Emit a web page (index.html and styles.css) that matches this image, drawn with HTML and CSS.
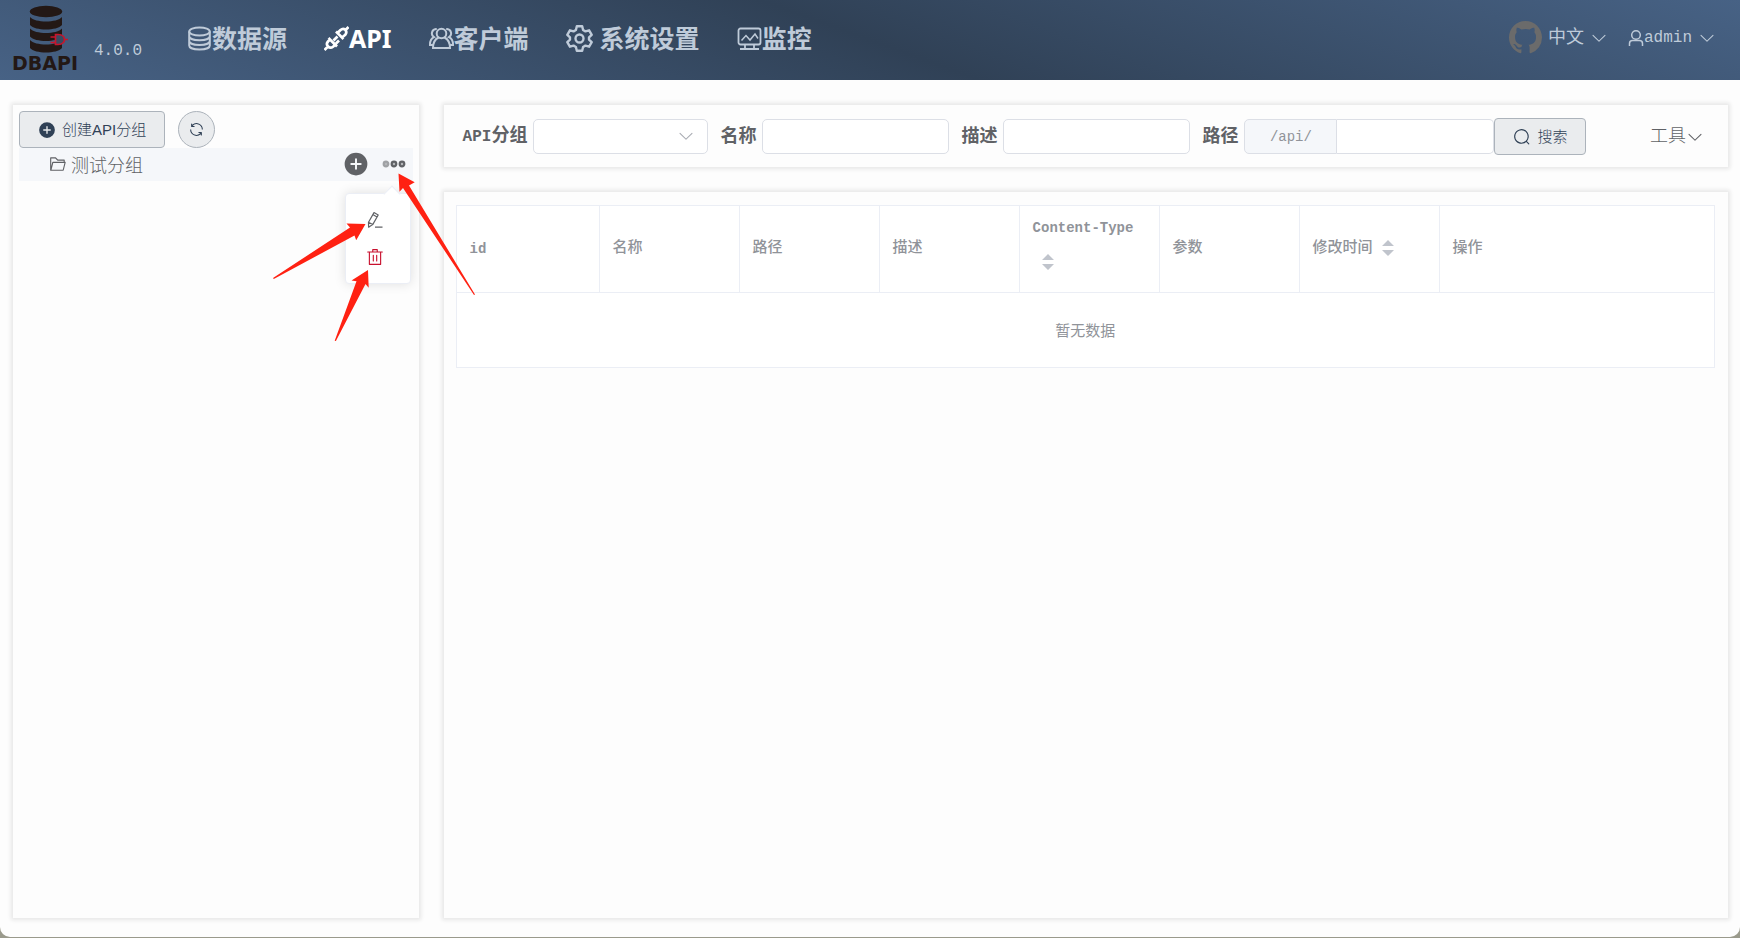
FILE: index.html
```html
<!DOCTYPE html>
<html lang="zh-CN">
<head>
<meta charset="utf-8">
<title>DBAPI</title>
<link rel="stylesheet" href="styles.css">
</head>
<body>
<svg class="sprite" aria-hidden="true">
  <symbol id="i-down" viewBox="0 0 1024 1024"><path d="M831.872 340.864 512 652.672 192.128 340.864a30.592 30.592 0 0 0-42.752 0 29.12 29.12 0 0 0 0 41.6L489.664 714.24a32 32 0 0 0 44.672 0l340.288-331.712a29.12 29.12 0 0 0 0-41.728 30.592 30.592 0 0 0-42.752 0z"/></symbol>
  <symbol id="i-plus" viewBox="0 0 1024 1024"><path d="M512 64a448 448 0 1 1 0 896 448 448 0 0 1 0-896zm-38.4 409.6H326.4a38.4 38.4 0 1 0 0 76.8h147.2v147.2a38.4 38.4 0 0 0 76.8 0V550.4h147.2a38.4 38.4 0 0 0 0-76.8H550.4V326.4a38.4 38.4 0 1 0-76.8 0v147.2z"/></symbol>
</svg>
<div class="window">
  <header class="topbar">
    <a class="brand" href="#">
      <svg class="brand-mark" viewBox="0 0 40 50" width="40" height="50">
        <g fill="#231815">
          <ellipse cx="17" cy="8.500" rx="16.200" ry="5.800"/>
          <path d="M1 14c5 6 27 6 32 0v8c-5 6-27 6-32 0z"/>
          <path d="M1 25.500c5 6 27 6 32 0v8c-5 6-27 6-32 0z"/>
          <path d="M1 37c5 6 27 6 32 0v8c-5 6-27 6-32 0z"/>
        </g>
        <path class="plug" d="M26.500 31.500h2.500c5 0 6.500 3 6.500 5s-1.500 5-6.500 5h-2.500zM35.500 36.500h3.500M21.500 34h5M21.500 39.500h5"/>
      </svg>
      <span class="brand-name">DBAPI</span>
    </a>
    <span class="version">4.0.0</span>
    <nav class="nav">
      <a href="#"><svg viewBox="0 0 25 25" fill="none" stroke="currentColor" stroke-width="2"><ellipse cx="12.500" cy="5.500" rx="10.300" ry="4"/><path d="M2.200 5.500v14c0 5.300 20.600 5.300 20.600 0v-14M2.200 10.200c0 5.300 20.600 5.300 20.600 0M2.200 15c0 5.300 20.600 5.300 20.600 0"/></svg>数据源</a>
      <a href="#" class="active"><svg viewBox="0 0 25 25" fill="none" stroke="currentColor" stroke-width="2.700" stroke-linejoin="round"><path d="M12 5.500l7.500 7.500M13.500 7l3-3c3.500-3 7.500 1 4.800 4.700L18 11.500M21 4.500l3.500-3.500M4.500 12l8.500 8.500M6 13.500l-2 2c-3 3.500 1.500 8 5 5.200l2.500-2.200M4 20.500l-3.500 3.500M13.500 10.500l-4 4M15 14.500l-3 3"/></svg>API</a>
      <a href="#"><svg viewBox="0 0 25 25" fill="none" stroke="currentColor" stroke-width="2" stroke-linecap="round"><circle cx="12.500" cy="7.500" r="4.800"/><path d="M9.500 11.500c-3 1.500-5.500 5-5.500 10.500h17c0-5.500-2.500-9-5.500-10.500M7 3c-4.500.5-5.500 6-2 8.200C2.500 12.500.900 15.500 1 19h2M18 3c4.500.5 5.500 6 2 8.200 2.500 1.300 4.100 4.300 4 7.800h-2"/></svg>客户端</a>
      <a href="#" class="spaced"><svg viewBox="0 0 25 25" fill="none" stroke="currentColor" stroke-width="2.200" stroke-linejoin="round"><path d="M10 1.200h5l.8 3.400 2.200 1.300 3.400-1 2.400 4.200-2.500 2.400v2l2.500 2.400-2.400 4.200-3.400-1-2.200 1.300-.8 3.400h-5l-.8-3.400L7 19.100l-3.400 1-2.400-4.200 2.500-2.400v-2L1.200 9.100l2.400-4.200 3.400 1 2.200-1.300z"/><circle cx="12.500" cy="12.500" r="3.700"/></svg>系统设置</a>
      <a href="#"><svg viewBox="0 0 25 25" fill="none" stroke="currentColor" stroke-width="1.800"><rect x="1.500" y="2.500" width="22" height="16" rx="2"/><path d="M4.500 14.500l4.500-5 4 4.500 5-6 3 4.500" stroke-width="1.500"/><path d="M8 18.500v4M17 18.500v4M3 23h19"/></svg>监控</a>
    </nav>
    <div class="account">
      <a class="github" href="#" aria-label="GitHub"><svg viewBox="0 0 16 16" width="33" height="33"><path d="M8 0C3.580 0 0 3.580 0 8c0 3.540 2.290 6.530 5.470 7.590.4.070.55-.17.55-.38 0-.19-.01-.82-.01-1.490-2.010.37-2.530-.49-2.690-.94-.09-.23-.48-.94-.82-1.130-.28-.15-.68-.52-.01-.53.63-.01 1.080.58 1.230.82.72 1.210 1.870.87 2.330.66.07-.52.28-.87.51-1.070-1.780-.2-3.640-.89-3.640-3.950 0-.87.31-1.590.82-2.150-.08-.2-.36-1.020.08-2.120 0 0 .67-.21 2.200.82.64-.18 1.320-.27 2-.27s1.360.09 2 .27c1.530-1.040 2.200-.82 2.200-.82.44 1.100.16 1.920.08 2.120.51.56.82 1.270.82 2.150 0 3.070-1.870 3.750-3.650 3.950.29.25.54.73.54 1.480 0 1.070-.01 1.930-.01 2.200 0 .21.15.46.55.38A8.010 8.010 0 0 0 16 8c0-4.420-3.580-8-8-8z"/></svg></a>
      <button class="menu lang" type="button"><span class="cjk">中文</span><svg class="chev"><use href="#i-down"/></svg></button>
      <button class="menu" type="button"><svg class="user" viewBox="0 0 16 18" fill="none" stroke="currentColor" stroke-width="1.500"><circle cx="8" cy="6" r="4.300"/><path d="M1.500 17v-2.500c0-2 1-3 3-3h7c2 0 3 1 3 3V17"/></svg>admin<svg class="chev"><use href="#i-down"/></svg></button>
    </div>
  </header>

  <main class="main">
    <aside class="panel side">
      <div class="side-tools">
        <button class="btn create" type="button"><svg class="ic18"><use href="#i-plus"/></svg>创建API分组</button>
        <button class="btn round" type="button" aria-label="刷新"><svg class="ic15" viewBox="0 0 1024 1024"><path d="M771.776 794.880A384 384 0 0 1 128 512h64a320 320 0 0 0 555.712 216.448H654.720a32 32 0 1 1 0-64h149.056a32 32 0 0 1 32 32v148.928a32 32 0 1 1-64 0v-50.560zM276.288 295.616h92.992a32 32 0 0 1 0 64H220.160a32 32 0 0 1-32-32V178.560a32 32 0 0 1 64 0v50.560A384 384 0 0 1 896.128 512h-64a320 320 0 0 0-555.776-216.384z"/></svg></button>
      </div>
      <div class="group">
        <svg class="ic18" viewBox="0 0 1024 1024"><path d="M878.080 448H241.920l-96 384h636.160l96-384zM832 384v-64H485.760L357.504 192H128v448l57.344-229.376A32 32 0 0 1 216.320 384H832zm-24.960 512H96a32 32 0 0 1-32-32V160a32 32 0 0 1 32-32h287.872l128.384 128H864a32 32 0 0 1 32 32v96h23.040a32 32 0 0 1 31.040 39.744l-112 448A32 32 0 0 1 807.040 896z"/></svg>
        <span class="group-name">测试分组</span>
        <button class="icon-btn add" type="button" aria-label="添加"><svg viewBox="0 0 1024 1024" width="26" height="26"><use href="#i-plus"/></svg></button>
        <button class="icon-btn more" type="button" aria-label="更多"><svg viewBox="0 0 24 8" width="24" height="8"><g fill="#b5b7ba" stroke-width="2.200"><circle cx="4" cy="4" r="2.300" stroke="#a0a2a5"/><circle cx="12" cy="4" r="2.300" stroke="#606266"/><circle cx="20" cy="4" r="2.300" stroke="#606266"/></g></svg></button>
        <div class="popover">
          <button class="icon-btn" type="button" aria-label="编辑"><svg viewBox="0 0 16 18" width="16" height="18" fill="none" stroke="currentColor" stroke-width="1.200" stroke-linejoin="round"><path d="M1.500 11.200L7 1.600l4.200 2.400L5.700 13.600 1.600 16.200zM5.800 3.600L10 6M1.500 11.200l4.200 2.400M8 16.200h7.500"/></svg></button>
          <button class="icon-btn danger" type="button" aria-label="删除"><svg viewBox="0 0 1024 1024" width="18" height="18"><path d="M160 256H96a32 32 0 0 1 0-64h256V95.936a32 32 0 0 1 32-32h256a32 32 0 0 1 32 32V192h256a32 32 0 1 1 0 64h-64v672a32 32 0 0 1-32 32H192a32 32 0 0 1-32-32V256zm448-64v-64H416v64h192zM224 896h576V256H224v640zm192-128a32 32 0 0 1-32-32V416a32 32 0 0 1 64 0v320a32 32 0 0 1-32 32zm192 0a32 32 0 0 1-32-32V416a32 32 0 0 1 64 0v320a32 32 0 0 1-32 32z"/></svg></button>
        </div>
      </div>
    </aside>

    <div class="content">
      <form class="panel filter">
        <div class="field"><label for="f-group"><span class="mono">API</span>分组</label>
          <span class="select"><select id="f-group"><option></option></select><svg class="chev"><use href="#i-down"/></svg></span></div>
        <div class="field"><label for="f-name">名称</label><input class="box" id="f-name" type="text"></div>
        <div class="field"><label for="f-desc">描述</label><input class="box" id="f-desc" type="text"></div>
        <div class="field"><label for="f-path">路径</label>
          <span class="joined"><span class="prefix">/api/</span><input class="box" id="f-path" type="text"></span><button class="btn search" type="button"><svg class="ic18" viewBox="0 0 1024 1024"><path d="m795.904 750.720 124.992 124.928a32 32 0 0 1-45.248 45.248L750.656 795.904a416 416 0 1 1 45.248-45.248zM480 832a352 352 0 1 0 0-704 352 352 0 0 0 0 704z"/></svg>搜索</button></div>
        <button class="menu tools" type="button">工具<svg class="chev"><use href="#i-down"/></svg></button>
      </form>

      <section class="panel list">
        <table>
          <colgroup><col class="c-id"><col class="c"><col class="c"><col class="c"><col class="c"><col class="c"><col class="c"><col></colgroup>
          <thead><tr>
            <th class="latin">id</th><th>名称</th><th>路径</th><th>描述</th>
            <th class="latin wrapped">Content-Type <svg class="sort" viewBox="0 0 24 24"><path d="M6 10l6-6 6 6zM6 14l6 6 6-6z"/></svg></th>
            <th>参数</th>
            <th>修改时间<svg class="sort" viewBox="0 0 24 24"><path d="M6 10l6-6 6 6zM6 14l6 6 6-6z"/></svg></th>
            <th>操作</th>
          </tr></thead>
          <tbody><tr><td colspan="8">暂无数据</td></tr></tbody>
        </table>
      </section>
    </div>
  </main>
  <svg class="arrows" width="500" height="350" viewBox="0 0 500 350" aria-hidden="true">
    <path d="M398.500 173.500l16.200 8.700-5.700 3.300 66 109-1 .5-71-107-3.500 3.700z"/>
    <path d="M365.500 224l-19-.5 3.500 4-77 50.500.8 1 80.700-43.500 1.700 4.800z"/>
    <path d="M368 270l-16.500 10.500 5 .7-21.800 59.500 1.200.3 29.600-57 3.200 3.800z"/>
  </svg>
</div>
</body>
</html>
```
FILE: styles.css
```css
* { box-sizing: border-box; }
body {
  margin: 0;
  min-height: 100vh;
  display: flex;
  background: #9a9a8c;
  color: #606266;
  font-family: "Liberation Mono", "Noto Sans CJK SC", monospace;
  font-size: 16px;
}
button, input, select { font: inherit; color: inherit; }
button { cursor: pointer; }
a { color: inherit; text-decoration: none; }
svg { fill: currentColor; flex: none; display: block; }
svg[fill="none"] { fill: none; }
.sprite { position: absolute; width: 0; height: 0; }
.window {
  position: relative;
  flex: 1;
  min-width: 0;
  display: flex;
  flex-direction: column;
  margin-bottom: 1px;
  background: #fdfdfd;
  border-radius: 0 0 10px 10px;
}

/* top bar */
.topbar {
  display: flex;
  align-items: center;
  height: 80px;
  padding: 0 24px 0 12px;
  color: #bfcbd9;
  background: linear-gradient(20deg, #476285, #304156 50%, #476285);
}
.brand { display: flex; flex-direction: column; width: 68px; align-self: flex-start; padding-top: 3px; }
.brand-mark { margin-left: 17px; }
.brand-name { font: bold 19px/20px "DejaVu Sans", sans-serif; color: #231815; }
.plug { fill: #3a4a60; stroke: #c8152d; stroke-width: 1.7px; }
.version { margin: 22px 0 0 14px; line-height: 20px; }
.nav {
  display: flex;
  gap: 37px;
  margin-left: 45px;
  padding-bottom: 4px;
  font: bold 25px/36px "Noto Sans", "Noto Sans CJK SC", sans-serif;
}
.nav a { display: flex; align-items: center; white-space: nowrap; }
.nav svg { width: 25px; height: 25px; }
.nav .spaced { gap: 7px; }
.nav .spaced svg { width: 27px; height: 27px; }
.nav .active { color: #fff; }
.account { display: flex; align-items: center; margin-left: auto; padding-bottom: 5px; }
.github { color: #6b6b6b; }
.menu { display: flex; align-items: center; padding: 0; border: 0; background: none; line-height: 24px; white-space: nowrap; }
.cjk, .tools { font-size: 18px; }
.menu .chev { margin-left: 6px; }
.chev { width: 18px; height: 18px; }
.lang { margin: 0 20px 0 6px; }
.user { width: 16px; height: 18px; }

/* layout */
.main {
  flex: 1;
  display: grid;
  grid-template-columns: minmax(0, 24fr) minmax(0, 76fr);
  gap: 25px;
  padding: 25px 12px 19px 13px;
}
.content { display: flex; flex-direction: column; gap: 25px; min-width: 0; }
.panel { background: #fdfdfd; box-shadow: 0 0 4px 2px #e6e6e6; }

/* group tree */
.side { padding: 6px; }
.side-tools { display: flex; gap: 13px; }
.btn {
  display: flex;
  align-items: center;
  justify-content: center;
  gap: 6px;
  height: 37px;
  padding: 0 18px;
  border: 1px solid #acb3bb;
  border-radius: 4px;
  background: #eaecee;
  color: #304156;
  font: 300 15px/20px "Liberation Sans", "Noto Sans CJK SC", sans-serif;
  white-space: nowrap;
}
.round { width: 37px; padding: 0; border-radius: 50%; }
.ic18 { width: 18px; height: 18px; }
.ic15 { width: 17px; height: 17px; }
.group {
  position: relative;
  display: flex;
  align-items: center;
  height: 33px;
  padding: 0 7px 2px 30px;
  background: #f5f7fa;
}
.group-name { margin-left: 4px; font-size: 18px; font-weight: 300; }
.icon-btn { display: block; padding: 0; border: 0; background: none; }
.add { margin-left: auto; }
.more { margin-left: 13px; }
.popover {
  position: absolute;
  top: 45px;
  right: 2px;
  width: 66px;
  display: grid;
  justify-items: center;
  gap: 19px;
  padding: 17px 10px 17px 4px;
  border: 1px solid #ebeef5;
  border-radius: 4px;
  background: #fff;
  box-shadow: 0 0 12px rgba(0, 0, 0, 0.12);
}
.popover::before {
  content: "";
  position: absolute;
  top: -6px;
  right: 12px;
  width: 11px;
  height: 11px;
  border: solid #ebeef5;
  border-width: 1px 0 0 1px;
  background: #fff;
  transform: rotate(45deg);
}
.danger { color: #c8102e; }

/* filter */
.filter { display: flex; flex-wrap: wrap; align-items: center; gap: 8px 12px; padding: 13px 24px 12px 19px; }
.field { display: flex; align-items: center; }
.field label { margin-right: 6px; font-size: 18px; font-weight: bold; line-height: 26px; white-space: nowrap; }
.field .mono { font-size: 16px; }
.box, .select select {
  width: 187px;
  height: 35px;
  padding: 0 12px;
  border: 1px solid #dcdfe6;
  border-radius: 5px;
  background: #fff;
  outline: 0;
}
.select { position: relative; }
.select select { width: 175px; appearance: none; display: block; }
.select .chev { position: absolute; right: 13px; top: 8px; color: #a8abb2; pointer-events: none; }
.joined { display: flex; }
.joined .box { width: 157px; border-left: 0; border-radius: 0 5px 5px 0; }
.prefix {
  width: 93px;
  height: 35px;
  border: 1px solid #dcdfe6;
  border-radius: 5px 0 0 5px;
  background: #f5f7fa;
  color: #909399;
  font-size: 14px;
  line-height: 35px;
  text-align: center;
}
.tools { margin-left: auto; font-weight: 300; }
.tools .chev { margin-left: 0; }

/* table */
.list { flex: 1; padding: 13px 13px 13px 12px; }
table { width: 100%; table-layout: fixed; border-collapse: collapse; background: #fff; color: #909399; font-size: 15px; }
.c-id { width: 143px; }
.c { width: 140px; }
th, td { border: 1px solid #ebeef5; }
th { height: 87px; padding: 0 12px 0 13px; text-align: left; font-size: 15px; font-weight: 500; line-height: 34px; }
.latin { font-size: 14px; font-weight: bold; }
.wrapped { padding-bottom: 8px; }
.sort { display: inline-block; width: 24px; height: 24px; margin-left: 3px; vertical-align: middle; fill: #c0c4cc; }
td { height: 75px; text-align: center; }

.arrows { position: absolute; left: 0; top: 0; pointer-events: none; fill: #ff2112; }
```
